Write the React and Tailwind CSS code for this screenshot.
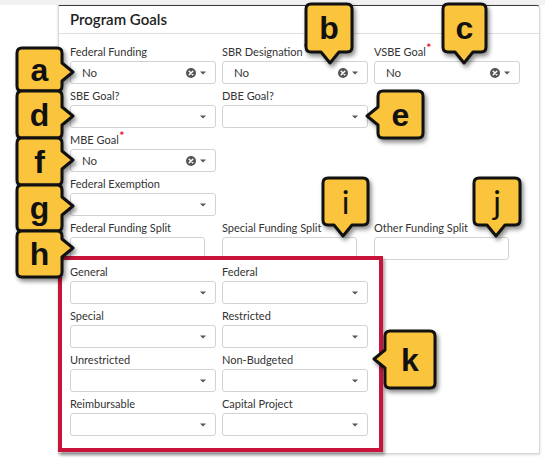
const ClearIcon = () => (
  <svg width="10" height="10" viewBox="0 0 10 10">
    <circle cx="5" cy="5" r="5" fill="#555" />
    <path d="M3.2 3.2l3.6 3.6M6.8 3.2l-3.6 3.6" stroke="#fff" strokeWidth={1.5} strokeLinecap="round" />
  </svg>
);

const Caret = () => (
  <svg width="6" height="4" viewBox="0 0 6 4">
    <path d="M0 0.5h6L3 3.5z" fill="#555" />
  </svg>
);

const Label = ({ text, required }) => (
  <div className="h-[14px] leading-[14px] text-[11px] text-[#333] mb-[2px] whitespace-nowrap">
    {text}
    {required && (
      <span className="text-[#e8101c] text-[8px] font-bold leading-none align-top relative -top-[1px] ml-[1px] font-['DejaVu_Sans',sans-serif]">
        *
      </span>
    )}
  </div>
);

const SelectField = ({ label, required, value }) => (
  <div>
    <Label text={label} required={required} />
    <div className="h-[23px] w-[146px] border border-[#d2d2d2] rounded-[3px] bg-white flex items-center pl-[11px] pr-[9px]">
      <span className="flex-1 text-[11.5px] text-[#3a3a3a]">{value}</span>
      {value && (
        <span className="mr-[4px] flex">
          <ClearIcon />
        </span>
      )}
      <Caret />
    </div>
  </div>
);

const TextField = ({ label }) => (
  <div>
    <Label text={label} />
    <div className="h-[23px] w-[135px] border border-[#d2d2d2] rounded-[3px] bg-white" />
  </div>
);

const Callout = ({ x, y, w, h, side, at, letter, thin }) => {
  const r = 5;
  const hw = 9;
  const d = 11;
  let p = `M${r} 0H${w - r}Q${w} 0 ${w} ${r}`;
  if (side === 'right') p += `V${at - hw}L${w + d} ${at}L${w} ${at + hw}`;
  p += `V${h - r}Q${w} ${h} ${w - r} ${h}`;
  if (side === 'down') p += `H${at + hw}L${at} ${h + d}L${at - hw} ${h}`;
  p += `H${r}Q0 ${h} 0 ${h - r}`;
  if (side === 'left') p += `V${at + hw}L${-d} ${at}L0 ${at - hw}`;
  p += `V${r}Q0 0 ${r} 0Z`;

  return (
    <div className="absolute" style={{ left: x, top: y, width: w, height: h }}>
      <svg
        width={w}
        height={h}
        className="absolute left-0 top-0 overflow-visible drop-shadow-[2px_3px_2px_rgba(0,0,0,0.45)]"
      >
        <path d={p} fill="#fac43d" stroke="#111" strokeWidth={3} strokeLinejoin="round" />
      </svg>
      <div
        className={
          thin
            ? "absolute inset-0 flex items-center justify-center text-[32px] leading-none text-[#111] font-['Lato',sans-serif]"
            : "absolute inset-0 flex items-center justify-center text-[32px] leading-none font-bold text-[#111] font-['Liberation_Sans',Arial,sans-serif]"
        }
      >
        {letter}
      </div>
    </div>
  );
};

export default function App() {
  return (
    <div className="relative w-[545px] h-[459px] bg-white overflow-hidden font-['Lato',sans-serif]">
      <div className="h-[5px] bg-[#f1f1f1]" />
      <div className="flex">
        <div className="w-[58px]" />
        <div className="w-[482px] h-[449px] bg-white border border-[#d6d6d6] border-t-[#3a3a3a] rounded-tr-[3px] shadow-[0_1px_3px_rgba(0,0,0,0.15)]">
          <div className="h-[28px] border-b border-[#dedede] pl-[11px] flex items-center">
            <h2 className="text-[15px] font-semibold text-[#222]">Program Goals</h2>
          </div>

          <div className="pl-[11px] pt-[11px] grid grid-cols-[146px_146px_146px] gap-x-[6px] gap-y-[5px]">
            <SelectField label="Federal Funding" value="No" />
            <SelectField label="SBR Designation" required value="No" />
            <SelectField label="VSBE Goal" required value="No" />

            <SelectField label="SBE Goal?" />
            <SelectField label="DBE Goal?" />
            <div />

            <SelectField label="MBE Goal" required value="No" />
            <div />
            <div />

            <SelectField label="Federal Exemption" />
            <div />
            <div />

            <TextField label="Federal Funding Split" />
            <TextField label="Special Funding Split" />
            <TextField label="Other Funding Split" />

            <SelectField label="General" />
            <SelectField label="Federal" />
            <div />

            <SelectField label="Special" />
            <SelectField label="Restricted" />
            <div />

            <SelectField label="Unrestricted" />
            <SelectField label="Non-Budgeted" />
            <div />

            <SelectField label="Reimbursable" />
            <SelectField label="Capital Project" />
            <div />
          </div>
        </div>
      </div>

      {/* red highlight around the funding selects */}
      <div className="absolute left-[58px] top-[256px] w-[325px] h-[196px] border-[4px] border-[#c8143a] shadow-[2px_3px_3px_rgba(0,0,0,0.35)]" />

      {/* callouts */}
      <Callout x={17} y={48} w={45} h={43} side="right" at={24} letter="a" />
      <Callout x={17} y={91} w={45} h={47} side="right" at={25} letter="d" />
      <Callout x={17} y={138} w={45} h={47} side="right" at={22} letter="f" />
      <Callout x={17} y={185} w={45} h={46} side="right" at={21} letter="g" />
      <Callout x={17} y={231} w={45} h={46} side="right" at={17} letter="h" />
      <Callout x={306} y={4} w={46} h={48} side="down" at={24} letter="b" />
      <Callout x={443} y={4} w={43} h={48} side="down" at={21} letter="c" />
      <Callout x={378} y={91} w={45} h={47} side="left" at={25} letter="e" />
      <Callout x={323} y={178} w={45} h={47} side="down" at={20} letter="i" thin />
      <Callout x={474} y={178} w={46} h={47} side="down" at={22} letter="j" thin />
      <Callout x={385} y={331} w={50} h={57} side="left" at={28} letter="k" />
    </div>
  );
}
